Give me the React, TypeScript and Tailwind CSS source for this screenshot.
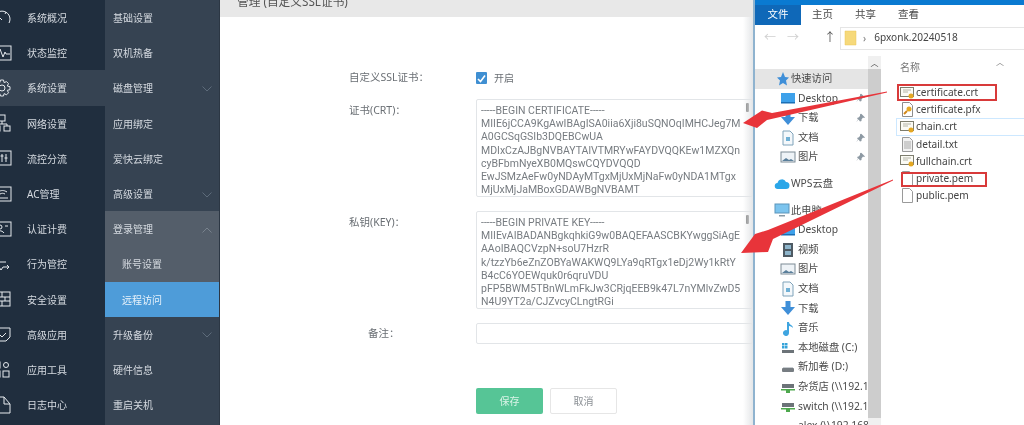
import React from "react";

const cjk = "font-['Noto_Sans','Noto_Sans_CJK_SC',sans-serif]";

const Ic = ({ children }: { children: React.ReactNode }) => (
  <svg width="20" height="20" viewBox="0 0 20 20" fill="none" stroke="#e6eaee" strokeWidth="1" className="absolute left-[-8px] top-1/2 -translate-y-1/2">
    {children}
  </svg>
);

const leftItems: [string, React.ReactNode, boolean?][] = [
  ["系统概况", <><path d="M3 15a8 8 0 1 1 14 0" /><path d="M7 9l3 3" /><path d="M14 4l-1 2" /></>],
  ["状态监控", <><rect x="2" y="3" width="17" height="14" /><path d="M3 11h3l2-5 3 8 2-5 1 2h4" /></>],
  ["系统设置", <><circle cx="10" cy="10" r="3" /><path d="M8.5 2h3l.6 2.6 2.4-1 2 2-1.2 2.4 2.7.7v3l-2.7.6 1.2 2.5-2 2-2.4-1.2-.6 2.4h-3l-.7-2.4-2.4 1.2-2-2 1.2-2.5L2 11.7v-3l2.6-.7-1.2-2.4 2-2 2.4 1z" /></>, true],
  ["网络设置", <><rect x="7" y="2" width="6" height="6" /><rect x="2" y="13" width="6" height="5" /><rect x="12" y="13" width="6" height="5" /><path d="M10 8v3M5 13v-2h10v2" /></>],
  ["流控分流", <><rect x="2" y="3" width="17" height="14" /><path d="M6 6v8M10 6v8M14 6v8M4.5 11h3M8.5 8h3M12.5 10h3" /></>],
  ["AC管理", <><rect x="2" y="3" width="17" height="14" /><path d="M5 14h11" /><path d="M6 8c3-2 6-2 9 0M8 10c2-1 3-1 5 0" /></>],
  ["认证计费", <><rect x="2" y="3" width="17" height="14" /><circle cx="8" cy="8" r="2" /><path d="M4 14c1-3 6-3 8 0M13 7h3" /></>],
  ["行为管控", <><path d="M2 8h12M5 3l-2 3M3 13h4l2 3 2-3h6M15 11l2 2-2 2" /></>],
  ["安全设置", <><rect x="3" y="3" width="15" height="14" /><path d="M3 8h15M3 12h15M10 3v5M7 8v4M13 8v4M10 12v5" /></>],
  ["高级应用", <><path d="M2 4h16v9l-4 4H2z" /><path d="M7 10l3 3 4-4" /></>],
  ["应用工具", <><rect x="2" y="3" width="6" height="6" /><rect x="2" y="12" width="6" height="6" /><rect x="11" y="12" width="6" height="6" /><circle cx="14" cy="6" r="2.5" /></>],
  ["日志中心", <><path d="M4 2h8l6 7v9H4z" /><path d="M12 2v7h6" /></>],
];

const Chev = ({ up }: { up?: boolean }) => (
  <svg width="10" height="6" viewBox="0 0 10 6" fill="none" stroke={up ? "#78828d" : "#5d6b7a"} strokeWidth="1" className="ml-auto mr-[7px]">
    <path d={up ? "M0.5 5.5L5 1l4.5 4.5" : "M0.5 0.5L5 5l4.5-4.5"} />
  </svg>
);

const subItems: { t: string; chev?: "d" | "u"; cls?: string }[] = [
  { t: "基础设置" },
  { t: "双机热备" },
  { t: "磁盘管理", chev: "d" },
  { t: "应用绑定" },
  { t: "爱快云绑定" },
  { t: "高级设置", chev: "d" },
  { t: "登录管理", chev: "u", cls: "bg-[#545e6a]" },
  { t: "账号设置", cls: "bg-[#545e6a] pl-[17px]" },
  { t: "远程访问", cls: "bg-[#4e9cd9] pl-[17px] text-[#e6f1fa]" },
  { t: "升级备份", chev: "d" },
  { t: "硬件信息" },
  { t: "重启关机" },
];

const crt = `-----BEGIN CERTIFICATE-----
MIIE6jCCA9KgAwIBAgISA0iia6Xji8uSQNOqIMHCJeg7M
A0GCSqGSIb3DQEBCwUA
MDIxCzAJBgNVBAYTAlVTMRYwFAYDVQQKEw1MZXQn
cyBFbmNyeXB0MQswCQYDVQQD
EwJSMzAeFw0yNDAyMTgxMjUxMjNaFw0yNDA1MTgx
MjUxMjJaMBoxGDAWBgNVBAMT`;

const key = `-----BEGIN PRIVATE KEY-----
MIIEvAIBADANBgkqhkiG9w0BAQEFAASCBKYwggSiAgE
AAoIBAQCVzpN+soU7HzrR
k/tzzYb6eZnZOBYaWAKWQ9LYa9qRTgx1eDj2Wy1kRtY
B4cC6YOEWquk0r6qruVDU
pFP5BWM5TBnWLmFkJw3CRjqEEB9k47L7nYMlvZwD5
N4U9YT2a/CJZvcyCLngtRGi`;

const TextBox = ({ text, h }: { text: string; h: string }) => (
  <div className={`relative w-[277px] ${h} border border-[#e2e5e8] rounded-[2px] overflow-hidden pl-[4px] pt-[4px]`}>
    <pre className="font-['Roboto',sans-serif] text-[10.5px] leading-[13.2px] text-[#777c81] whitespace-pre">{text}</pre>
    <div className="absolute right-[3px] top-[3px] w-[3px] h-[9px] bg-[#777] rounded-[1px]" />
  </div>
);

const Folder = () => (
  <svg width="13" height="16" viewBox="0 0 13 16" className="shrink-0"><path d="M1 1h11v14H1z" fill="#f6d97a" stroke="#e8c65a" strokeWidth="0.5" /></svg>
);

type FK = "cert" | "pfx" | "txt" | "blank";

const FileIcon = ({ kind }: { kind: FK }) => {
  if (kind === "cert")
    return (
      <svg width="15" height="14" viewBox="0 0 15 14" className="shrink-0">
        <rect x="0.5" y="1.5" width="13" height="9" fill="#fbfbf5" stroke="#7d7d6e" />
        <path d="M3 4h8M3 6h5" stroke="#b5b5a8" />
        <circle cx="11" cy="10" r="2.5" fill="#e5a823" />
      </svg>
    );
  if (kind === "pfx")
    return (
      <svg width="15" height="15" viewBox="0 0 15 15" className="shrink-0">
        <path d="M2.5 0.5h7l3 3v11h-10z" fill="#fff" stroke="#8d8d8d" />
        <circle cx="9" cy="7" r="2.5" fill="#e5a823" />
        <path d="M7 9l-3 3" stroke="#d0871b" strokeWidth="2" />
      </svg>
    );
  return (
    <svg width="15" height="15" viewBox="0 0 15 15" className="shrink-0">
      <path d="M2.5 0.5h7l3 3v11h-10z" fill={kind === "txt" ? "#f2f2f2" : "#fff"} stroke="#9a9a9a" />
      {kind === "txt" && <path d="M4 5h7M4 7h7M4 9h7M4 11h7" stroke="#a9a9a9" />}
    </svg>
  );
};

const NavIcon = ({ k }: { k: string }) => {
  const common = { width: 16, height: 16, viewBox: "0 0 16 16", className: "shrink-0" };
  switch (k) {
    case "star":
      return <svg {...common}><path d="M9 1l2 5 4 .5-3 3 1 5-4-2.5-4 2.5 1-5-3-3 4-.5z" fill="#3f8fd8" /></svg>;
    case "desk":
      return <svg {...common}><rect x="1" y="3" width="14" height="10" fill="#3ea1ea" /><rect x="1" y="12" width="14" height="1.5" fill="#1b6fb5" /></svg>;
    case "down":
      return <svg {...common}><path d="M5.5 1h5v6H15l-7 8-7-8h4.5z" fill="#3f8fd8" /></svg>;
    case "doc":
      return <svg {...common}><path d="M3 1h7l3 3v11H3z" fill="#f4f8fb" stroke="#7fa3ba" /><path d="M6 7h4v4H6z" fill="#6fb0d5" /></svg>;
    case "pic":
      return <svg {...common}><rect x="1" y="3" width="14" height="10" fill="#eef3f7" stroke="#7c8b96" /><path d="M2 12l4-3 3 2 2-1 3 2z" fill="#5a7f9b" /></svg>;
    case "cloud":
      return <svg {...common}><path d="M4 13a3 3 0 0 1-.5-6A4.5 4.5 0 0 1 12 6a3.5 3.5 0 0 1 0 7z" fill="#2aa6e8" /></svg>;
    case "pc":
      return <svg {...common}><rect x="1" y="2" width="14" height="9" fill="#7cc4ee" stroke="#5b95bb" /><rect x="5" y="13" width="6" height="1.5" fill="#8a9aa5" /></svg>;
    case "video":
      return <svg {...common}><rect x="3" y="1" width="10" height="14" fill="#4e5a63" /><rect x="5" y="3" width="6" height="4" fill="#8eb5cb" /><rect x="5" y="9" width="6" height="4" fill="#8eb5cb" /></svg>;
    case "music":
      return <svg {...common}><path d="M7 2h2c0 3 4 3 4 6-1-1-2-2-4-2v7a3 3 0 1 1-2-2.8z" fill="#3fa5e0" /></svg>;
    case "c":
      return <svg {...common}><rect x="2" y="10" width="12" height="3" fill="#6c7378" /><rect x="2" y="3" width="2.5" height="2.5" fill="#36a3d9" /><rect x="5" y="3" width="2.5" height="2.5" fill="#36a3d9" /><rect x="2" y="6" width="2.5" height="2.5" fill="#36a3d9" /><rect x="5" y="6" width="2.5" height="2.5" fill="#36a3d9" /></svg>;
    case "d":
      return <svg {...common}><rect x="2" y="9" width="12" height="4" rx="1" fill="#777d82" /><rect x="3" y="8" width="10" height="1" fill="#c9ced2" /></svg>;
    case "net":
      return <svg {...common}><rect x="2" y="5" width="12" height="4" fill="#6c7378" /><rect x="1" y="10" width="14" height="1.5" fill="#4da84d" /><rect x="6" y="11" width="4" height="3" fill="#4da84d" /></svg>;
    default:
      return <svg {...common} />;
  }
};

const nav: { t: string; k: string; lvl?: number; pin?: boolean; gap?: string; cls?: string }[] = [
  { t: "快速访问", k: "star", lvl: 0, cls: "bg-[#e5e5e5]" },
  { t: "Desktop", k: "desk", pin: true },
  { t: "下载", k: "down", pin: true },
  { t: "文档", k: "doc", pin: true },
  { t: "图片", k: "pic", pin: true },
  { t: "WPS云盘", k: "cloud", lvl: 0, gap: "mt-[7px]" },
  { t: "此电脑", k: "pc", lvl: 0, gap: "mt-[7px]" },
  { t: "Desktop", k: "desk" },
  { t: "视频", k: "video" },
  { t: "图片", k: "pic" },
  { t: "文档", k: "doc" },
  { t: "下载", k: "down" },
  { t: "音乐", k: "music" },
  { t: "本地磁盘 (C:)", k: "c" },
  { t: "新加卷 (D:)", k: "d" },
  { t: "杂货店 (\\\\192.168", k: "net" },
  { t: "switch (\\\\192.168", k: "net" },
  { t: "alex (\\\\192.168", k: "d" },
];

const files: { t: string; k: FK; cls?: string }[] = [
  { t: "certificate.crt", k: "cert" },
  { t: "certificate.pfx", k: "pfx" },
  { t: "chain.crt", k: "cert", cls: "border border-[#cde8ff] -ml-[4px] pl-[3px] -mr-[200px]" },
  { t: "detail.txt", k: "txt" },
  { t: "fullchain.crt", k: "cert" },
  { t: "private.pem", k: "blank" },
  { t: "public.pem", k: "blank" },
];

const Pin = () => (
  <svg width="9" height="9" viewBox="0 0 9 9" className="absolute left-[101px] top-1/2 -translate-y-1/2">
    <path d="M5 0l4 4-1 .5-1-.5-1.5 2v1.5L4 8 2.5 6 0 9l2-3L1 4.5 2.5 4 4 2.5 4 1z" fill="#8d99a3" />
  </svg>
);

export default function App() {
  return (
    <div className={`relative w-[1024px] h-[425px] overflow-hidden bg-white flex blur-[0.35px] ${cjk}`}>
      {/* left column */}
      <div className="w-[105px] h-full bg-[#202e3e] shrink-0">
        {leftItems.map(([t, ic, act]) => (
          <div key={t} className={`relative h-[35.2px] flex items-center pl-[27px] pt-[2px] text-[10px] text-[#d5dae0] ${act ? "bg-[#364352]" : ""}`}>
            <Ic>{ic}</Ic>
            {t}
          </div>
        ))}
      </div>
      {/* sub column */}
      <div className="w-[115px] h-full bg-[#364352] shrink-0 border-r border-[#2c3744]">
        {subItems.map((s) => (
          <div key={s.t} className={`h-[35.2px] flex items-center pl-[8px] pt-[2px] text-[10px] text-[#d5dae0] ${s.cls ?? ""}`}>
            {s.t}
            {s.chev && <Chev up={s.chev === "u"} />}
          </div>
        ))}
      </div>
      {/* content */}
      <div className="w-[533px] h-full shrink-0 relative flex flex-col">
        <div className="h-[17px] bg-[#e8e8e8] shrink-0 overflow-hidden relative pl-[17px]">
          <div className="-mt-[7px] text-[11.7px] leading-[16px] text-[#555]">管理 (自定义SSL证书)</div>
        </div>
        <div className="pl-[129px] text-[10.5px] text-[#6a6f74]">
          <div className="flex items-center h-[16px] mt-[53px]">
            <span className="w-[127px]">自定义SSL证书：</span>
            <span className="w-[11px] h-[12px] rounded-[1px] bg-[#3f8fd2] flex items-center justify-center">
              <svg width="9" height="9" viewBox="0 0 9 9" fill="none" stroke="#fff" strokeWidth="1.6"><path d="M1 5l2.5 2.5L8 1.5" /></svg>
            </span>
            <span className="ml-[7px] text-[10px]">开启</span>
          </div>
          <div className="flex mt-[13px]">
            <span className="w-[127px] leading-[16px] -mt-[2px] pt-[5px]">证书(CRT)：</span>
            <TextBox text={crt} h="h-[98px]" />
          </div>
          <div className="flex mt-[14px]">
            <span className="w-[127px] leading-[16px] pt-[3px]">私钥(KEY)：</span>
            <TextBox text={key} h="h-[98px]" />
          </div>
          <div className="flex mt-[14px]">
            <span className="w-[127px] pl-[19px] leading-[20px]">备注：</span>
            <div className="w-[277px] h-[21px] border border-[#e2e5e8] rounded-[2px]" />
          </div>
          <div className="flex mt-[44px] ml-[127px] gap-[7px] text-[10px]">
            <div className="w-[67px] h-[26px] rounded-[2px] bg-[#56c596] text-[#d9f3e6] flex items-center justify-center">保存</div>
            <div className="w-[67px] h-[26px] rounded-[2px] border border-[#e6e6e6] text-[#8a8f94] flex items-center justify-center">取消</div>
          </div>
        </div>
        <div className="absolute right-0 top-[17px] bottom-0 w-[10px] bg-gradient-to-r from-transparent to-[#e4e6e8]" />
      </div>
      {/* explorer */}
      <div className="flex-1 h-full border-l-2 border-[#8fb3cf] flex flex-col bg-white text-[#4a4a4a] min-w-0">
        <div className="h-[5px] bg-[#0a7ad1] shrink-0" />
        <div className="h-[20px] flex items-center text-[10.5px] shrink-0">
          <div className="w-[46px] h-full bg-[#0f68b8] text-white flex items-center justify-center">文件</div>
          <span className="ml-[11px]">主页</span>
          <span className="ml-[22px]">共享</span>
          <span className="ml-[22px]">查看</span>
        </div>
        <div className="h-[26px] shrink-0 flex items-center relative">
          <span className="text-[#d0d0d0] text-[12px] ml-[9px]">←</span>
          <span className="text-[#d0d0d0] text-[12px] ml-[11px]">→</span>
          <span className="text-[#555] text-[12px] ml-[25px]">↑</span>
          <div className="ml-[4px] flex-1 h-[23px] border border-[#e5e5e5] border-r-0 flex items-center pl-[3px] text-[10.1px] text-[#444]">
            <Folder />
            <span className="ml-[6px] text-[#777] text-[10px]">›</span>
            <span className="ml-[8px]">6pxonk.20240518</span>
          </div>
        </div>
        <div className="flex-1 flex min-h-0 mt-[5px]">
          <div className="w-[113px] shrink-0 overflow-hidden pt-[13px] text-[10.3px]">
            {nav.map((n, i) => (
              <div key={i} className={`relative h-[19.6px] flex items-center whitespace-nowrap ${n.lvl === 0 ? "pl-[18px]" : "pl-[25px]"} ${n.gap ?? ""} ${n.cls ?? ""}`}>
                <span className={`absolute ${n.lvl === 0 ? "left-[19px]" : "left-[25px]"}`}><NavIcon k={n.k} /></span>
                <span className="ml-[18px]">{n.t}</span>
                {n.pin && <Pin />}
              </div>
            ))}
          </div>
          <div className="w-[13px] shrink-0 bg-[#f0f0f0] flex flex-col">
            <div className="h-[13px] shrink-0 text-center text-[8px] leading-[14px] text-[#555]">︿</div>
            <div className="h-[349px] bg-[#cdcdcd]" />
          </div>
          <div className="flex-1 overflow-hidden pl-[19px] relative">
            <div className="text-[10px] text-[#777] mt-[3px] leading-[16px]">名称</div>
            <span className="absolute left-[115px] top-[0px] text-[8px] text-[#888]">︿</span>
            <div className="mt-[9px] text-[10.1px] text-[#444]">
              {files.map((f) => (
                <div key={f.t} className={`h-[17.2px] flex items-center gap-[1px] whitespace-nowrap ${f.cls ?? ""}`}>
                  <FileIcon kind={f.k} />
                  {f.t}
                </div>
              ))}
            </div>
          </div>
        </div>
      </div>

      {/* annotations */}
      <div className="absolute left-[897px] top-[84px] w-[100px] h-[17px] border-2 border-[#d83a3a]" />
      <div className="absolute left-[901px] top-[172px] w-[86px] h-[15px] border-2 border-[#d83a3a]" />
      <svg width="1024" height="425" className="absolute left-0 top-0 pointer-events-none">
        <path d="M887 91.5 L772 113 L762 110.5 L743 123 L757 128 L767 120 L887 92.5 Z" fill="#e8343a" />
        <path d="M893 179.5 L768 230 L755 234 L741 253 L768 252 L773 239 L893 180.5 Z" fill="#e8343a" />
      </svg>
    </div>
  );
}
